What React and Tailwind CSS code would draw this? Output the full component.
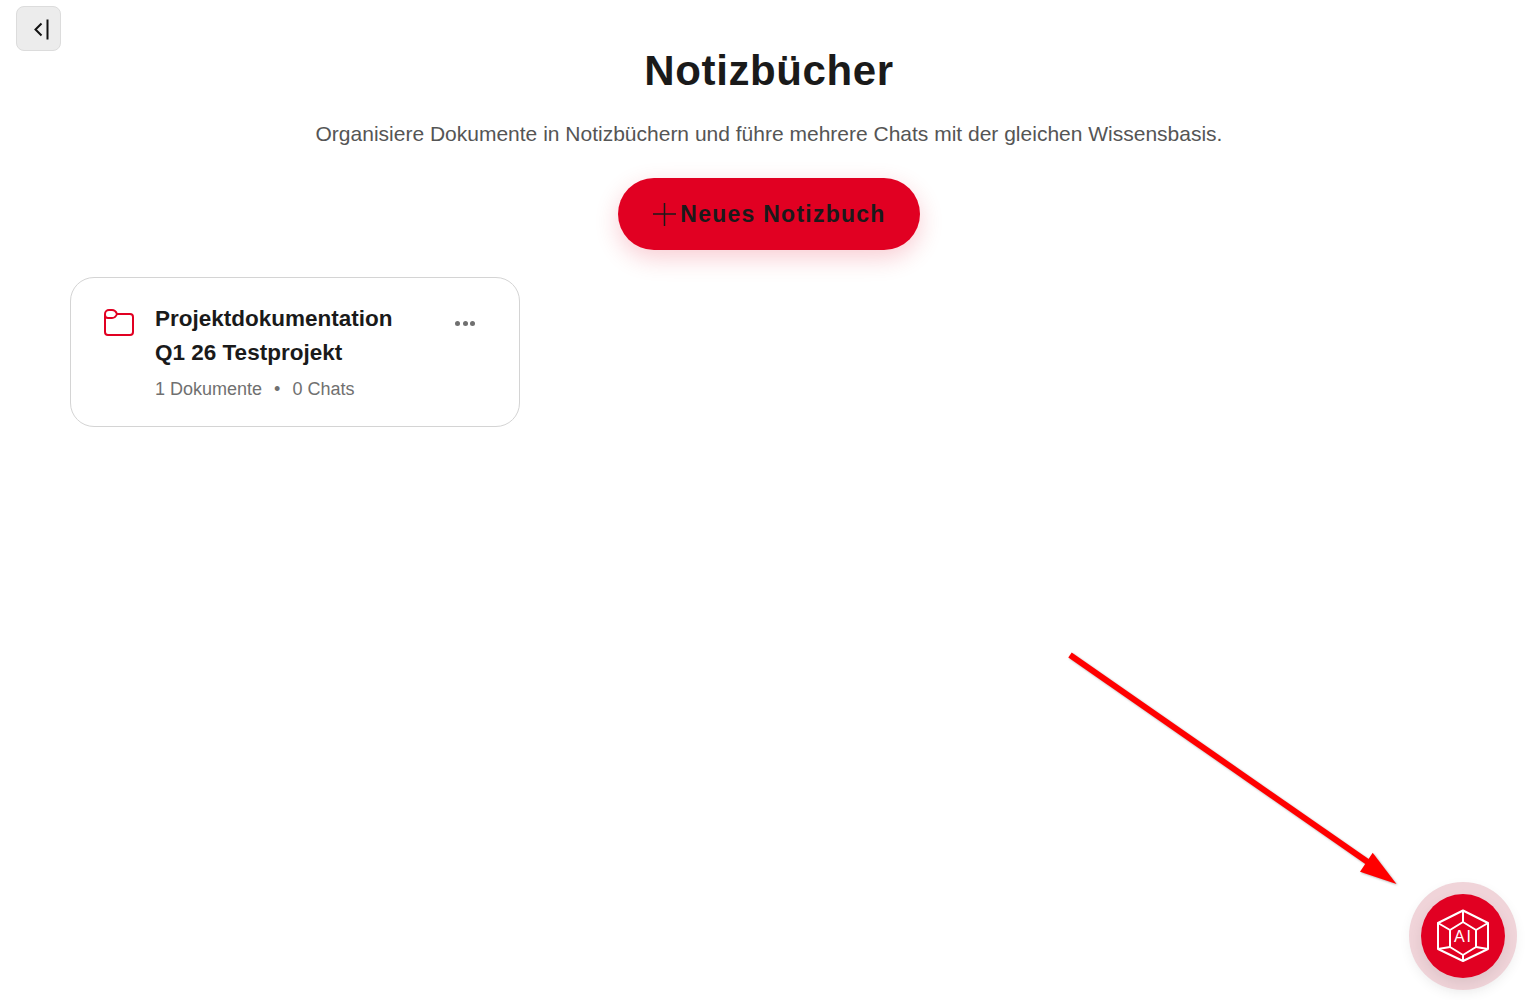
import React from 'react'

const font = { fontFamily: '"Liberation Sans", Arial, sans-serif' }

const FolderIcon = () => (
  <svg width="32" height="32" viewBox="0 0 32 32" fill="none" stroke="#e10022" strokeWidth="2" strokeLinejoin="round">
    <path d="M2 8a4 4 0 0 1 4-4h3c2.500 0 4 1.500 5 4h13a3 3 0 0 1 3 3v15a3 3 0 0 1-3 3H5a3 3 0 0 1-3-3z" />
    <path d="M2 9c0 2 1 3 3 3h4c2.500 0 4-1.500 5-4" />
  </svg>
)

const AiIcon = () => (
  <svg width="54" height="54" viewBox="0 0 54 54" fill="none" stroke="#fff" strokeWidth="2" strokeLinejoin="round">
    <path d="M27 1.500 L52 14 V40 L27 52 L2 40 V14 Z" />
    <path d="M27 13 L40 21 V38 L27 46 L14 38 V21 Z" />
    <path d="M27 1.500V13M27 46V52M2 14L14 21M52 14L40 21M2 40L14 38M52 40L40 38" />
    <text x="27.500" y="33" textAnchor="middle" fontSize="16" letterSpacing="2" fill="#fff" stroke="none" style={font}>AI</text>
  </svg>
)

const Arrow = () => (
  <svg className="absolute left-[1060px] top-[645px] drop-shadow-[1px_1px_1px_rgba(0,0,0,0.3)]" width="350" height="250" viewBox="0 0 350 250">
    <line x1="10" y1="10" x2="312" y2="220" stroke="#ff0000" strokeWidth="6" />
    <polygon points="336.500,239 300,226.700 312.700,207.700" fill="#ff0000" />
  </svg>
)

export default function App() {
  return (
    <div className="relative h-[1000px] bg-white overflow-hidden" style={font}>
      <button className="absolute left-4 top-[6px] w-[45px] h-[45px] rounded-lg bg-[#ececec] border border-[#dcdcdc] flex items-center justify-center">
        <svg width="24" height="24" viewBox="0 0 24 24" fill="none" stroke="#111" strokeWidth="2">
          <path d="M14.500 6.500 8.500 12.500l6 6" />
          <path d="M20.500 2.500v20" />
        </svg>
      </button>

      <div className="flex flex-col items-center pt-[44px] pl-[7px]">
        <h1 className="text-[42px] leading-[54px] font-bold text-[#1a1a1a] tracking-[0.6px]">Notizbücher</h1>
        <p className="mt-[22px] text-[21px] leading-[28px] text-[#555]">
          Organisiere Dokumente in Notizbüchern und führe mehrere Chats mit der gleichen Wissensbasis.
        </p>
        <button className="mt-[30px] w-[302px] h-[72px] rounded-[36px] bg-[#e10022] flex items-center justify-center gap-[4px] shadow-[0_8px_24px_rgba(225,0,34,0.2)]">
          <svg width="24" height="24" viewBox="0 0 24 24" stroke="#1a1a1a" strokeWidth="1.500">
            <path d="M1 12h23M12.500 1v23" />
          </svg>
          <span className="text-[23px] font-bold text-[#1a1a1a] tracking-[1.250px]">Neues Notizbuch</span>
        </button>
      </div>

      <div className="mt-[27px] ml-[70px] w-[450px] h-[150px] rounded-[24px] border border-[#d4d4d4] flex pl-[32px] pt-[24px]">
        <div className="w-[32px] h-[32px] mt-[4px]">
          <FolderIcon />
        </div>
        <div className="ml-[20px] w-[300px]">
          <div className="text-[22.500px] leading-[34px] font-bold text-[#1a1a1a]">Projektdokumentation<br />Q1 26 Testprojekt</div>
          <div className="mt-[7px] text-[18px] leading-[24px] text-[#707070] flex">
            <span>1 Dokumente</span>
            <span className="mx-[12px]">•</span>
            <span>0 Chats</span>
          </div>
        </div>
        <div className="mt-[19px] flex gap-[2.500px] h-[5px]">
          <span className="w-[5px] h-[5px] rounded-full bg-[#707070]" />
          <span className="w-[5px] h-[5px] rounded-full bg-[#707070]" />
          <span className="w-[5px] h-[5px] rounded-full bg-[#707070]" />
        </div>
      </div>

      <Arrow />

      <div className="absolute left-[1409px] top-[882px] w-[108px] h-[108px] rounded-full bg-[#f0d4d9] flex items-center justify-center shadow-[0_4px_12px_rgba(0,0,0,0.06)]">
        <div className="w-[84px] h-[84px] rounded-full bg-[#e10022] flex items-center justify-center shadow-[0_6px_14px_rgba(0,0,0,0.08)]">
          <AiIcon />
        </div>
      </div>
    </div>
  )
}
